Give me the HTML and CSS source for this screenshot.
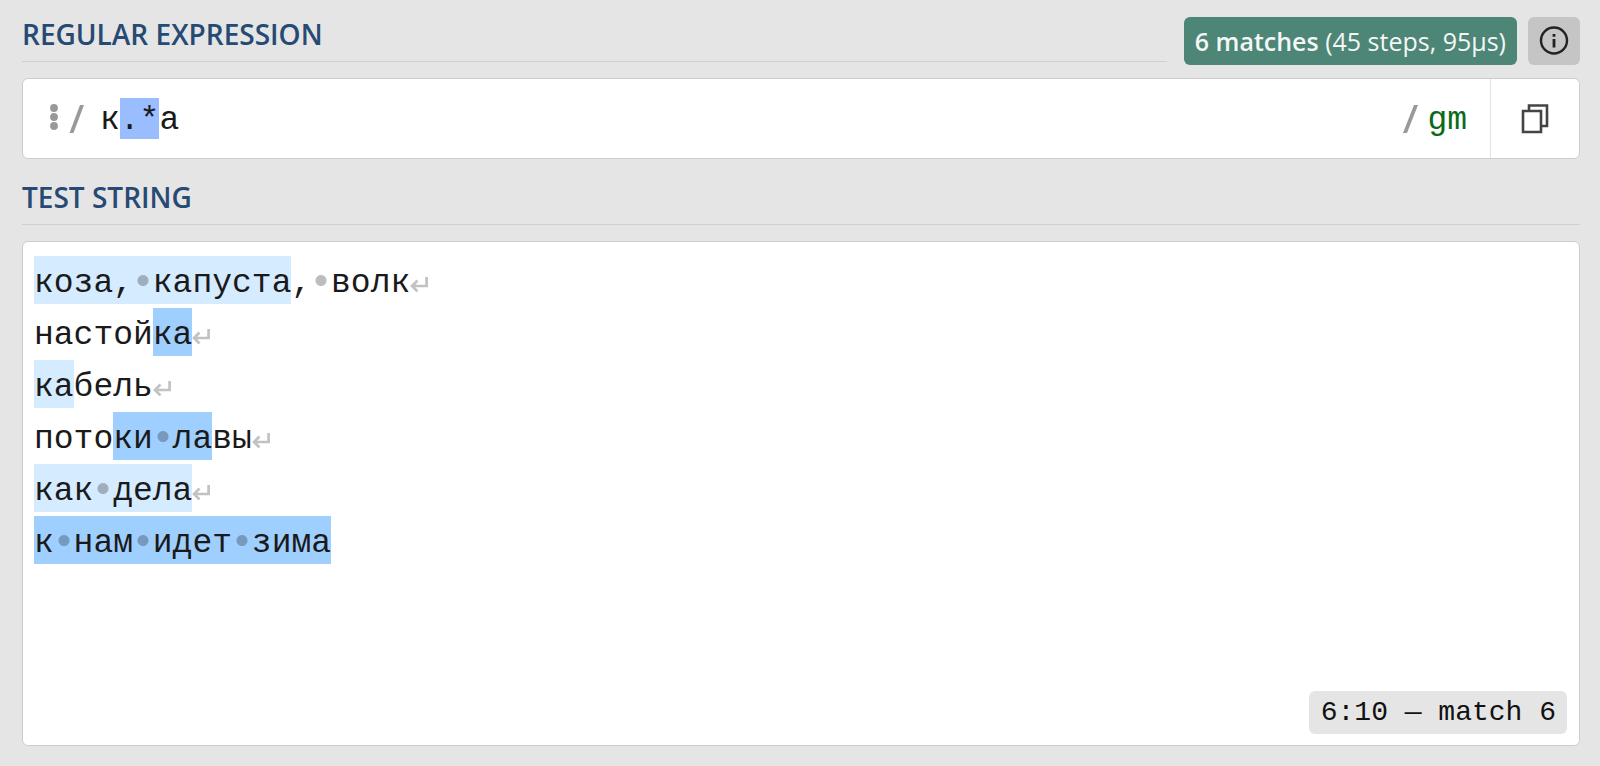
FILE: index.html
```html
<!DOCTYPE html>
<html lang="en">

<head>
    <meta charset="utf-8" />
    <title>Regex tester</title>
    <meta name="viewport" content="width=device-width,initial-scale=1" />
    <link rel="stylesheet" href="styles.css">
</head>

<body>
    <svg class="sprite" aria-hidden="true">
        <symbol id="return" viewBox="0 0 18 15">
            <path d="M16.6 0v9H2M7.5 3.5L2 9l5.5 5.5" fill="none" stroke="currentColor" stroke-width="2.7" />
        </symbol>
    </svg>

    <header class="header">
        <h2 class="title"><label for="regex">REGULAR EXPRESSION</label></h2>
        <div class="result"><strong>6 matches</strong> (45 steps, 95µs)</div>
        <button class="info" type="button" aria-label="Match information">
            <svg width="30" height="30" viewBox="0 0 30 30">
                <circle cx="15" cy="14.5" r="13" fill="none" stroke="currentColor" stroke-width="2.4" />
                <path d="M13.6 8h2.8v2.8h-2.8zM13.6 13h2.8v8.4h-2.8z" fill="currentColor" />
            </svg>
        </button>
    </header>

    <div class="panel regex-panel">
        <button class="delimiter" type="button" aria-label="Change delimiter">
            <svg width="36" height="30" viewBox="0 0 36 30" fill="currentColor">
                <circle cx="5" cy="4" r="3.9" />
                <circle cx="5" cy="13" r="3.9" />
                <circle cx="5" cy="22" r="3.9" />
                <path d="M31 1h4L24.5 29h-4z" />
            </svg>
        </button>
        <div class="layers">
            <div class="backdrop" aria-hidden="true">к<mark class="token">.*</mark></div>
            <input class="code" id="regex" type="text" value="к.*а" spellcheck="false">
        </div>
        <button class="flags" type="button" aria-label="Set flags: gm">
            <svg width="16" height="30" viewBox="0 0 16 30" fill="currentColor">
                <path d="M12 1h4L5 29H1z" />
            </svg>
            <span>gm</span>
        </button>
        <button class="copy" type="button" aria-label="Copy to clipboard">
            <svg width="28" height="32" viewBox="0 0 28 32" fill="none" stroke="currentColor" stroke-width="2.6">
                <path d="M2 8h18v21H2z" />
                <path d="M8 8V2.500h18V23h-6" />
            </svg>
        </button>
    </div>

    <h2 class="title"><label for="test">TEST STRING</label></h2>

    <div class="panel test-panel">
        <div class="layers">
            <div class="backdrop" aria-hidden="true"><mark>коза,<i> </i>капуста</mark>,<i> </i>волк<svg class="eol"><use href="#return" /></svg>
настой<mark class="even">ка</mark><svg class="eol"><use href="#return" /></svg>
<mark>ка</mark>бель<svg class="eol"><use href="#return" /></svg>
пото<mark class="even">ки<i> </i>ла</mark>вы<svg class="eol"><use href="#return" /></svg>
<mark>как<i> </i>дела</mark><svg class="eol"><use href="#return" /></svg>
<mark class="even">к<i> </i>нам<i> </i>идет<i> </i>зима</mark></div>
            <textarea class="code" id="test" spellcheck="false">коза, капуста, волк
настойка
кабель
потоки лавы
как дела
к нам идет зима</textarea>
        </div>
        <div class="position">6:10 — match 6</div>
    </div>
</body>

</html>
```

FILE: styles.css
```css
* {
    box-sizing: border-box;
}

body {
    display: flex;
    flex-direction: column;
    min-height: 100vh;
    margin: 0;
    padding: 17px 20px 20px 22px;
    background: #e5e5e5;
    color: #111;
    font-family: "Open Sans", sans-serif;
}

button {
    margin: 0;
    padding: 0;
    border: 0;
    background: none;
    cursor: pointer;
}

svg {
    display: block;
}

.sprite {
    display: none;
}

/* headings */
.header {
    display: flex;
    align-items: flex-start;
    margin-bottom: 13px;
}

.title {
    margin: 0;
    padding-bottom: 9px;
    border-bottom: 1px solid #d0d0d0;
    color: #264a73;
    font-size: 28px;
    font-weight: 600;
    line-height: 35px;
}

.header .title {
    flex: 1;
}

.result {
    margin: 0 11px 0 17px;
    padding: 0 11px;
    border-radius: 6px;
    background: #4d8576;
    color: #f3f7f5;
    font-size: 25px;
    line-height: 48px;
    white-space: nowrap;
}

.result strong {
    font-weight: 600;
}

.info {
    display: grid;
    place-items: center;
    width: 52px;
    height: 48px;
    border-radius: 6px;
    background: #c5c5c5;
    color: #222;
}

/* panels */
.panel {
    border: 1px solid #cdcdcd;
    border-radius: 6px;
    background: #fff;
}

.regex-panel {
    display: flex;
    align-items: center;
    height: 81px;
    margin-bottom: 21px;
}

.delimiter {
    margin: 0 15px 0 26px;
    color: #999;
}

.flags {
    display: flex;
    align-items: center;
    gap: 9px;
    padding-right: 23px;
    color: #999;
    font: 33px/52px "Liberation Mono", monospace;
}

.flags span {
    padding-top: 4px;
    color: #0a6a1a;
}

.copy {
    display: grid;
    place-items: center;
    align-self: stretch;
    width: 89px;
    border-left: 1px solid #e2e2e2;
    color: #444;
}

.test-panel {
    position: relative;
    display: flex;
    flex: 1;
    margin-top: 16px;
    padding: 12px 11px;
}

/* the text box lies over a backdrop that paints the matches */
.layers {
    display: grid;
    flex: 1;
}

.backdrop,
.code {
    grid-area: 1 / 1;
    width: 100%;
    margin: 0;
    padding: 4px 0 0;
    border: 0;
    font: 33px/52px "Liberation Mono", monospace;
    white-space: pre-wrap;
}

.backdrop {
    color: transparent;
}

.code {
    background: none;
    color: #1a1a1a;
    outline: none;
    resize: none;
}

mark {
    padding: 9px 0 2px;
    background: #d5ebff;
    color: inherit;
}

mark.even {
    background: #9fcfff;
}

mark.token {
    padding: 4px 0 0;
    background: #99bdff;
}

.backdrop i {
    background: radial-gradient(circle at 50% 42%, rgba(0, 0, 0, 0.26) 5px, transparent 6px);
    font-style: normal;
}

.eol {
    display: inline-block;
    width: 18px;
    height: 15px;
    color: #c2c2c2;
}

.position {
    position: absolute;
    right: 12px;
    bottom: 11px;
    padding: 0 11px 0 12px;
    border-radius: 6px;
    background: #e5e5e5;
    font: 28px/43px "Liberation Mono", monospace;
}
```
